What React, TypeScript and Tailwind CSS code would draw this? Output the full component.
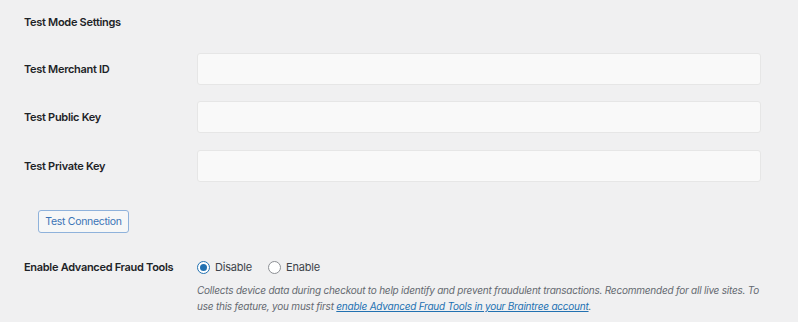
import React from "react";

const font = { fontFamily: "Inter, 'Liberation Sans', sans-serif" };

function Field({ label, className }: { label: string; className?: string }) {
  return (
    <div className={`flex items-center ${className ?? ""}`}>
      <div className="w-[173px] text-[11px] font-semibold tracking-[-0.3px] text-[#1d2327]">{label}</div>
      <div className="h-[32px] w-[564px] rounded-[3px] border border-[#e6e6e6] bg-[#f9f9f9]" />
    </div>
  );
}

function Radio({ checked, label }: { checked?: boolean; label: string }) {
  return (
    <label className="flex items-center gap-[5px] text-[11px] tracking-[-0.2px] text-[#3c434a]">
      <span
        className={`flex h-[13px] w-[13px] items-center justify-center rounded-full border bg-white ${
          checked ? "border-[#2271b1]" : "border-[#8c8f94]"
        }`}
      >
        {checked && <span className="h-[7px] w-[7px] rounded-full bg-[#2271b1]" />}
      </span>
      {label}
    </label>
  );
}

export default function App() {
  return (
    <div className="h-[322px] w-[798px] bg-[#f0f0f1] pl-[24px] pt-[12px]" style={font}>
      <div className="flex h-[20px] items-center text-[11px] font-semibold tracking-[-0.3px] text-[#1d2327]">
        Test Mode Settings
      </div>

      <Field label="Test Merchant ID" className="mt-[21px]" />
      <Field label="Test Public Key" className="mt-[16px]" />
      <Field label="Test Private Key" className="mt-[17px]" />

      <button className="ml-[14px] mt-[28px] flex h-[23px] w-[91px] items-center justify-center whitespace-nowrap rounded-[3px] border border-[#8fb2db] bg-[#f6f7f7] text-[10.5px] tracking-[-0.3px] text-[#3b74b6]">
        Test Connection
      </button>

      <div className="mt-[24px] flex">
        <div className="flex h-[20px] w-[173px] items-center whitespace-nowrap text-[11px] font-semibold tracking-[-0.3px] text-[#1d2327]">
          Enable Advanced Fraud Tools
        </div>
        <div className="w-[566px]">
          <div className="flex h-[20px] items-center gap-[16px]">
            <Radio checked label="Disable" />
            <Radio label="Enable" />
          </div>
          <p className="mt-[5px] text-[10px] italic leading-[16px] tracking-[-0.22px] text-[#646970]">
            Collects device data during checkout to help identify and prevent fraudulent transactions. Recommended for all live sites. To use this feature, you must first{" "}
            <a className="text-[#2271b1] underline">enable Advanced Fraud Tools in your Braintree account</a>.
          </p>
        </div>
      </div>
    </div>
  );
}
